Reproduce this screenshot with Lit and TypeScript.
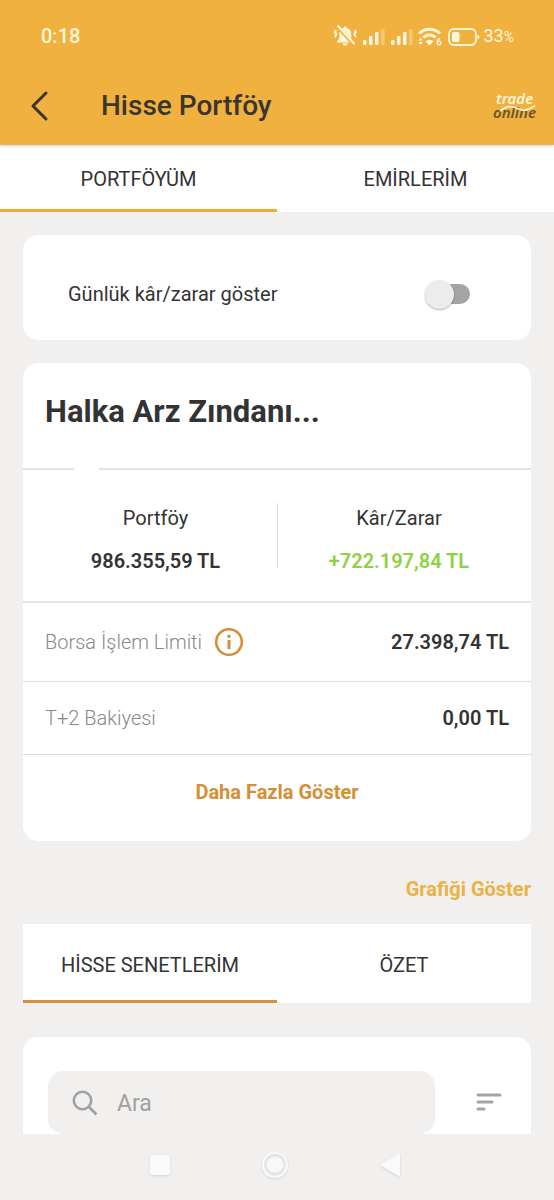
import { LitElement, html, css, svg } from "lit";
import { customElement, property, state } from "lit/decorators.js";
import { classMap } from "lit/directives/class-map.js";

@customElement("status-bar")
class StatusBar extends LitElement {
  static styles = css`
    :host {
      display: flex;
      align-items: center;
      justify-content: space-between;
      padding: 0 40px 0 41px;
      height: 72px;
      color: #fff6dc;
      font-size: 20px;
      font-weight: 500;
    }
    .right {
      display: flex;
      align-items: center;
      gap: 4px;
    }
    .level {
      font-size: 18px;
      font-weight: 400;
    }
    .percent {
      font-size: 14px;
    }
  `;

  private bars(x: number) {
    return svg`
      <g transform="translate(${x} 0)">
        <rect x="0" y="17" width="3.500" height="5" rx="1" />
        <rect x="6" y="13" width="3.500" height="9" rx="1" />
        <rect x="12" y="9" width="3.500" height="13" rx="1" />
        <rect x="18" y="6" width="3.500" height="16" rx="1" opacity="0.35" />
      </g>`;
  }

  render() {
    return html`
      <time>0:18</time>
      <div class="right">
        <svg width="147" height="26" viewBox="0 0 147 26" fill="#fff6dc" aria-hidden="true">
          <g transform="translate(1 0)">
            <path d="M11 3.500c.9 0 1.400.6 1.500 1.300 3 .8 4.700 3.200 4.700 6.200v4.500l2.300 3v1H3v-1l2.300-3V11c0-3 1.700-5.400 4.300-6.200.1-.7.6-1.300 1.400-1.300zM8.500 20.200h5.300a2.700 2.700 0 0 1-5.300 0z" />
            <path d="M2.500 2.500l17.500 19" stroke="#f1b13f" stroke-width="4" />
            <path d="M4 3l16 17.500" stroke="#fff6dc" stroke-width="2" stroke-linecap="round" />
            <path d="M2.200 7l-1.400 2 1.600 2-1.400 3M20.500 7l1.500 2-1.600 2 1.400 3" fill="none" stroke="#fff6dc" stroke-width="2" />
          </g>
          ${this.bars(30)} ${this.bars(58)}
          <g fill="none" stroke="#fff6dc" stroke-width="3">
            <path d="M86 10.500a15 15 0 0 1 21 0" />
            <path d="M90.300 14.500a9 9 0 0 1 12.400 0" />
          </g>
          <path d="M92.500 18.200a6 6 0 0 1 8 0l-4 4.300z" />
          <path d="M87.600 14.500l2.300 3h-4.600zM87.600 22l2.300-3h-4.600z" />
          <circle cx="106" cy="20" r="1.800" fill="none" stroke="#fff6dc" stroke-width="1.400" />
          <path d="M104.200 19.500q0-3.500 3-4" fill="none" stroke="#fff6dc" stroke-width="1.400" />
          <rect x="116" y="6" width="27" height="16" rx="5" fill="none" stroke="#fff6dc" stroke-width="1.800" />
          <rect x="119" y="9" width="7.500" height="10" rx="2" />
          <path d="M144.500 11.500q2 .5 2 2.500t-2 2.500z" />
        </svg>
        <span class="level">33<span class="percent">%</span></span>
      </div>
    `;
  }
}

@customElement("tab-strip")
class TabStrip extends LitElement {
  @property({ attribute: false }) tabs: string[] = [];
  @property({ type: Number }) selected = 0;

  static styles = css`
    :host {
      display: block;
      background: #fff;
    }
    .tabs {
      display: grid;
      grid-template-columns: 1fr 1fr;
    }
    .tab {
      font: inherit;
      font-size: 20px;
      line-height: 24px;
      color: #333;
      background: none;
      border: 0;
      border-bottom: 3px solid transparent;
      padding: var(--tab-top, 22px) 0 var(--tab-bottom, 18px);
      cursor: pointer;
    }
    .selected {
      border-bottom-color: var(--tab-line, #e9ad3a);
    }
  `;

  render() {
    return html`<div class="tabs" role="tablist">
      ${this.tabs.map(
        (label, i) => html`<button
          class=${classMap({ tab: true, selected: i === this.selected })}
          role="tab"
          aria-selected=${i === this.selected}
          @click=${() => (this.selected = i)}
        >${label}</button>`
      )}
    </div>`;
  }
}

@customElement("app-root")
class AppRoot extends LitElement {
  @state() private daily = false;

  static styles = css`
    :host {
      display: flex;
      flex-direction: column;
      min-height: 100vh;
      background: #f1f0ee;
      color: #333;
      font-family: Roboto, "Noto Sans", sans-serif;
      font-size: 20px;
      line-height: 24px;
    }
    * {
      box-sizing: border-box;
    }
    button {
      font: inherit;
      color: inherit;
      background: none;
      border: 0;
      padding: 0;
      cursor: pointer;
    }
    svg {
      display: block;
    }
    .top {
      background: #f1b13f;
      box-shadow: 0 1px 3px rgba(0, 0, 0, 0.2);
      position: relative;
    }
    .bar {
      display: flex;
      align-items: center;
      height: 73px;
      padding: 0 16px 6px 27px;
    }
    .back {
      width: 74px;
    }
    .bar-title {
      flex: 1;
      margin: 0;
      font-size: 28px;
      line-height: 32px;
      font-weight: 500;
      color: #3a3530;
    }
    .logo-text {
      font-family: "Noto Sans", sans-serif;
      font-style: italic;
      font-weight: 600;
      font-size: 15px;
    }
    .main {
      flex: 1;
      display: flex;
      flex-direction: column;
      padding: 23px 23px 0;
    }
    .card {
      background: #fff;
      border-radius: 15px;
    }
    .toggle-card {
      display: flex;
      align-items: center;
      justify-content: space-between;
      padding: 47px 61px 34px 45px;
      margin-bottom: 23px;
    }
    .switch {
      appearance: none;
      display: flex;
      align-items: center;
      width: 36px;
      height: 20px;
      margin: 0;
      background: #a5a3a4;
      border-radius: 10px;
      cursor: pointer;
    }
    .switch::before {
      content: "";
      flex: none;
      width: 29px;
      height: 29px;
      margin: 0 -9px;
      border-radius: 50%;
      background: #ececec;
      box-shadow: 0 1px 2px rgba(0, 0, 0, 0.3);
    }
    .switch:checked {
      justify-content: flex-end;
    }
    .account {
      position: relative;
      margin: 0;
      padding: 29px 22px 36px;
      font-size: 31px;
      line-height: 40px;
      font-weight: 700;
      border-bottom: 2px solid #e3e3e3;
    }
    .account::after {
      content: "";
      position: absolute;
      left: 51px;
      bottom: -3px;
      width: 25px;
      height: 5px;
      border-radius: 0 12px 0 0;
      background: #fff;
    }
    .totals {
      display: grid;
      grid-template-columns: 1fr 1fr;
      padding: 33px 11px;
      border-bottom: 2px solid #e3e3e3;
    }
    .total {
      display: flex;
      flex-direction: column;
      align-items: center;
      gap: 19px;
      padding-top: 3px;
      height: 65px;
    }
    .total + .total {
      border-left: 1px solid #dedede;
    }
    .value {
      font-weight: 600;
    }
    .gain {
      color: #8ed144;
    }
    .row {
      display: flex;
      align-items: center;
      justify-content: space-between;
      padding: 24px 22px;
      border-bottom: 1px solid #dcdcdc;
    }
    .name {
      display: flex;
      align-items: center;
      gap: 12px;
      color: #888;
      font-weight: 300;
    }
    .more {
      display: block;
      width: 100%;
      padding: 25px 0 37px;
      font-weight: 700;
      color: #d48f37;
    }
    .chart {
      align-self: flex-end;
      margin: 36px 0 23px;
      font-weight: 700;
      color: #ecb244;
    }
    .sub {
      --tab-top: 29px;
      --tab-bottom: 23px;
      --tab-line: #d38f43;
    }
    .list {
      display: flex;
      align-items: center;
      gap: 40px;
      margin-top: 34px;
      padding: 34px 28px 0 25px;
      border-radius: 15px 15px 0 0;
    }
    .search {
      flex: 1;
      min-width: 0;
      display: flex;
      align-items: center;
      gap: 19px;
      height: 63px;
      padding: 0 24px;
      border-radius: 15px;
      background: #f1f0ee;
    }
    .search-input {
      flex: 1;
      min-width: 0;
      padding: 2px 0 0;
      border: 0;
      outline: 0;
      background: none;
      font: inherit;
      font-size: 23px;
      color: #333;
    }
    .search-input::placeholder {
      color: #a0a0a0;
      opacity: 1;
    }
    .system {
      display: flex;
      justify-content: center;
      align-items: center;
      height: 66px;
      padding: 0 4px 4px 0;
    }
    .system-key {
      display: flex;
      justify-content: center;
      width: 115px;
      filter: drop-shadow(0 1px 1px rgba(0, 0, 0, 0.12));
    }
  `;

  render() {
    return html`
      <header class="top">
        <status-bar></status-bar>
        <div class="bar">
          <button class="back" aria-label="Geri">
            <svg width="24" height="32" viewBox="0 0 24 32" fill="none" stroke="#3a3530" stroke-width="3" stroke-linecap="round" stroke-linejoin="round">
              <path d="M19 3L6 16l13 13" />
            </svg>
          </button>
          <h1 class="bar-title">Hisse Portföy</h1>
          <svg width="46" height="40" viewBox="0 0 46 40" role="img" aria-label="trade online">
            <text class="logo-text" x="4" y="18" fill="#fff3d4">trade</text>
            <text class="logo-text" x="1" y="32" fill="#6b552b">online</text>
            <path d="M8 25Q15 19.500 21 21T31 24.500Q37 24 43 19.500" fill="none" stroke="#fff3d4" stroke-width="1.800" />
          </svg>
        </div>
      </header>
      <tab-strip .tabs=${["PORTFÖYÜM", "EMİRLERİM"]}></tab-strip>
      <main class="main">
        <section class="card toggle-card">
          <label for="daily">Günlük kâr/zarar göster</label>
          <input
            class="switch"
            id="daily"
            type="checkbox"
            role="switch"
            .checked=${this.daily}
            @change=${(e: Event) => (this.daily = (e.target as HTMLInputElement).checked)}
          />
        </section>
        <section class="card">
          <h2 class="account">Halka Arz Zındanı...</h2>
          <div class="totals">
            <div class="total"><span>Portföy</span><span class="value">986.355,59 TL</span></div>
            <div class="total"><span>Kâr/Zarar</span><span class="value gain">+722.197,84 TL</span></div>
          </div>
          <div class="row">
            <span class="name">
              Borsa İşlem Limiti
              <button aria-label="Bilgi">
                <svg width="30" height="30" viewBox="0 0 30 30">
                  <circle cx="15" cy="15" r="12.800" fill="none" stroke="#d48f37" stroke-width="2.600" />
                  <circle cx="15" cy="9.300" r="1.700" fill="#d48f37" />
                  <rect x="13.500" y="13" width="3" height="9" fill="#d48f37" />
                </svg>
              </button>
            </span>
            <span class="value">27.398,74 TL</span>
          </div>
          <div class="row">
            <span class="name">T+2 Bakiyesi</span>
            <span class="value">0,00 TL</span>
          </div>
          <button class="more">Daha Fazla Göster</button>
        </section>
        <button class="chart">Grafiği Göster</button>
        <tab-strip class="sub" .tabs=${["HİSSE SENETLERİM", "ÖZET"]}></tab-strip>
        <section class="card list">
          <div class="search">
            <svg width="26" height="26" viewBox="0 0 26 26" fill="none" stroke="#a0a0a0" stroke-width="2.600">
              <circle cx="10.500" cy="10.500" r="8.700" />
              <path d="M16.500 16.500l8 8" />
            </svg>
            <input class="search-input" type="search" placeholder="Ara" aria-label="Ara" />
          </div>
          <button aria-label="Sırala">
            <svg width="28" height="20" viewBox="0 0 28 20" stroke="#a3a3a3" stroke-width="3" stroke-linecap="round">
              <path d="M3 2h22M3 9h14M3 16h6" />
            </svg>
          </button>
        </section>
      </main>
      <nav class="system" aria-label="Sistem">
        <button class="system-key" aria-label="Son uygulamalar">
          <svg width="20" height="20"><rect width="20" height="20" rx="3" fill="#fafafa" /></svg>
        </button>
        <button class="system-key" aria-label="Ana ekran">
          <svg width="28" height="28" viewBox="0 0 28 28" fill="#f8f8f8">
            <circle cx="14" cy="14" r="12" fill="none" stroke="#fafafa" stroke-width="2" />
            <circle cx="14" cy="14" r="8" />
          </svg>
        </button>
        <button class="system-key" aria-label="Geri">
          <svg width="20" height="24" viewBox="0 0 20 24"><path d="M0 12L20 0v24z" fill="#fafafa" /></svg>
        </button>
      </nav>
    `;
  }
}
